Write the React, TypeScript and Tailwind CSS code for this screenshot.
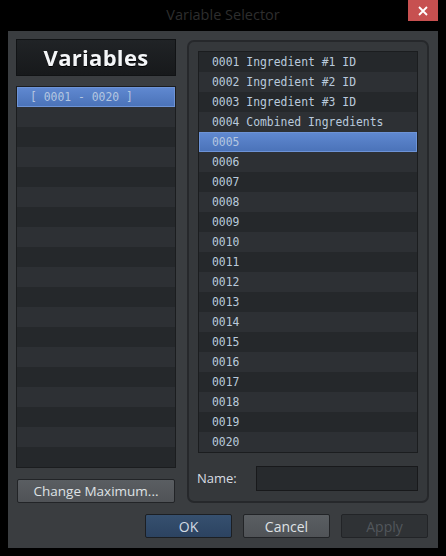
import React from "react"

const ui = { fontFamily: '"Open Sans", "Liberation Sans", sans-serif' }
const mono = { fontFamily: '"DejaVu Sans Mono", "Liberation Mono", monospace' }

const names: Record<number, string> = {
  1: "Ingredient #1 ID",
  2: "Ingredient #2 ID",
  3: "Ingredient #3 ID",
  4: "Combined Ingredients",
}

function Row({ label, selected, odd }: { label: string; selected?: boolean; odd: boolean }) {
  if (selected) {
    return (
      <div className="h-[20px] flex items-center pt-[2px] pl-[12px] bg-gradient-to-b from-[#5f88d0] to-[#4b73b9] border border-[#6d93d6] text-[#b4c6e0] text-[11.4px] whitespace-pre" style={mono}>
        {label}
      </div>
    )
  }
  return (
    <div className={`h-[20px] flex items-center pt-[2px] pl-[13px] text-[#b9cadc] text-[11.4px] whitespace-pre ${odd ? "bg-[#2d3034]" : "bg-[#25282b]"}`} style={mono}>
      {label}
    </div>
  )
}

export default function App() {
  const vars = Array.from({ length: 20 }, (_, i) => {
    const n = i + 1
    const id = String(n).padStart(4, "0")
    return names[n] ? `${id} ${names[n]}` : id
  })

  return (
    <div className="w-[446px] h-[556px] bg-black flex flex-col" style={ui}>
      {/* title bar */}
      <div className="relative h-[31px] flex items-center justify-center">
        <span className="text-[14.5px] text-[#2e2e2e] -mt-[1px]">Variable Selector</span>
        <div className="absolute right-[8px] top-0 w-[30px] h-[21px] bg-[#c75050] flex items-center justify-center">
          <svg width="10" height="10" viewBox="0 0 10 10">
            <path d="M1 1L9 9M9 1L1 9" stroke="#fff" strokeWidth="1.8" />
          </svg>
        </div>
      </div>

      {/* body */}
      <div className="mx-[8px] h-[517px] bg-[#3a3d40] flex flex-col pl-[8px] pr-[9px] pt-[8px]">
        <div className="flex gap-[11px]">
          {/* left column */}
          <div className="w-[160px] flex flex-col">
            <div className="h-[37px] bg-gradient-to-b from-[#202326] to-[#17191b] border border-[#111315] flex items-center justify-center">
              <span className="text-[22px] font-bold text-[#f4f6f8] tracking-[0.3px] drop-shadow-[0_1px_0_#000]">Variables</span>
            </div>
            <div className="mt-[10px] h-[382px] border border-[#1b1d1f] flex flex-col">
              <Row label="[ 0001 - 0020 ]" selected odd={false} />
              {Array.from({ length: 18 }, (_, i) => (
                <div key={i} className={`h-[20px] ${i % 2 === 0 ? "bg-[#2d3034]" : "bg-[#25282b]"}`} />
              ))}
            </div>
            <button className="mt-[11px] mx-[1px] h-[24px] rounded-[2px] bg-gradient-to-b from-[#5a5e62] to-[#505357] border border-[#222427] text-[13.5px] text-[#dfe2e5]">
              Change Maximum...
            </button>
          </div>

          {/* right panel */}
          <div className="mt-[1px] w-[242px] h-[463px] rounded-[7px] border-2 border-[#26282b] bg-[#35383b] px-[9px] pt-[9px] flex flex-col">
            <div className="h-[402px] border border-[#1b1d1f] flex flex-col">
              {vars.map((v, i) => (
                <Row key={i} label={v} selected={i === 4} odd={i % 2 === 1} />
              ))}
            </div>
            <div className="mt-[13px] flex items-center justify-between">
              <span className="text-[13px] text-[#d8dde2] -ml-[1px]">Name:</span>
              <div className="w-[162px] h-[25px] bg-[#272a2d] border border-[#18191b]" />
            </div>
          </div>
        </div>

        {/* buttons */}
        <div className="mt-[11px] flex justify-end gap-[11px] pr-[1px]">
          <button className="w-[87px] h-[24px] rounded-[2px] bg-gradient-to-b from-[#36506f] to-[#2c4361] border border-[#1c1f23] text-[14px] text-[#d3dbe4]">
            OK
          </button>
          <button className="w-[87px] h-[24px] rounded-[2px] bg-gradient-to-b from-[#5a5e62] to-[#505357] border border-[#222427] text-[14px] text-[#dfe2e5]">
            Cancel
          </button>
          <button className="w-[87px] h-[24px] rounded-[2px] bg-[#2f3235] border border-[#222427] text-[14px] text-[#52575c]">
            Apply
          </button>
        </div>
      </div>
    </div>
  )
}
